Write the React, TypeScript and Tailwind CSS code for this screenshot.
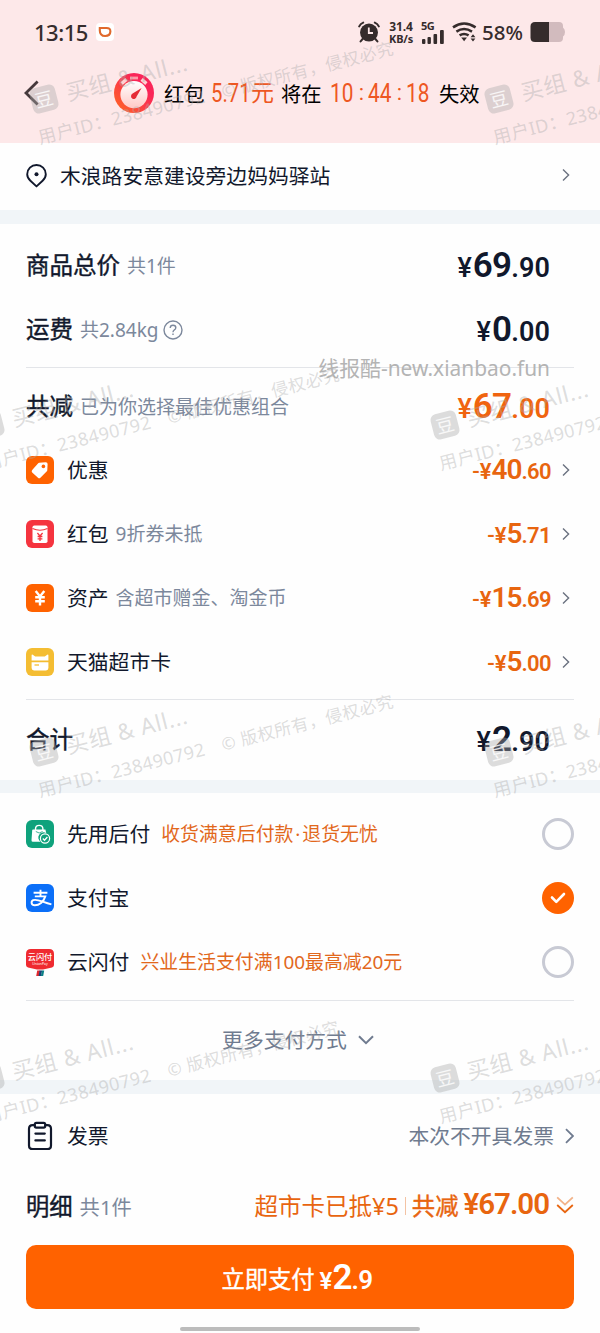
import React from 'react';

const ORANGE = '#ff6200';

const Chevron = ({ className = '' }: { className?: string }) => (
    <svg width="8" height="14" viewBox="0 0 8 14" fill="none" className={className}>
        <path d="M1 1.5L6.6 7L1 12.5" stroke="#6b7280" strokeWidth="1.4" />
    </svg>
);

interface PriceProps {
    whole: string;
    cents: string;
    minus?: boolean;
    small?: boolean;
    color?: string;
}

const Price = ({ whole, cents, minus, small, color = 'text-[#11182c]' }: PriceProps) => (
    <div className={`flex items-baseline font-[Roboto] font-semibold leading-none ${color} ${small ? 'text-[22px]' : 'text-[27px]'}`}>
        {minus && <span className="font-medium">-</span>}
        <span className={small ? '' : 'mr-[1px] font-medium'}>¥</span>
        <span className={small ? 'text-[28px] tracking-[-1px]' : 'text-[35px] tracking-[-0.8px]'}>{whole}</span>
        <span className={small ? 'tracking-[-0.6px]' : 'tracking-[0.1px]'}>.{cents}</span>
    </div>
);

const TagIcon = () => (
    <svg width="28" height="28" viewBox="0 0 28 28">
        <rect width="28" height="28" rx="6" fill={ORANGE} />
        <path d="M13.2 6.8L19.6 6.2Q21.6 6.1 21.6 8.1L21.3 14.2Q21.2 15 20.6 15.6L14.4 21.8Q13.2 22.8 12 21.8L6.2 16.4Q5.1 15.2 6.2 14L12 7.6Q12.5 6.9 13.2 6.8Z" fill="#fff" />
        <circle cx="17.4" cy="10.4" r="1.8" fill={ORANGE} />
    </svg>
);

const PacketIcon = () => (
    <svg width="28" height="28" viewBox="0 0 28 28">
        <rect width="28" height="28" rx="6" fill="#f5343f" />
        <rect x="6.5" y="5.5" width="15" height="17.5" rx="1.8" fill="#fff" />
        <path d="M6.5 8.6Q14 12 21.5 8.6" fill="none" stroke="#f5343f" strokeWidth="1.1" />
        <path d="M11.4 13L14 16L16.6 13M14 16V21M11.6 16.5H16.4M11.6 18.8H16.4" fill="none" stroke="#f5343f" strokeWidth="1.3" />
    </svg>
);

const YuanIcon = () => (
    <svg width="28" height="28" viewBox="0 0 28 28">
        <rect width="28" height="28" rx="6" fill={ORANGE} />
        <path d="M9.7 7L14 12.4L18.3 7M14 12.4V21.5M9.2 13.2H18.8M9.2 17.2H18.8" fill="none" stroke="#fff" strokeWidth="2.4" />
    </svg>
);

const CatCardIcon = () => (
    <svg width="28" height="28" viewBox="0 0 28 28">
        <rect width="28" height="28" rx="6" fill="#f4bd32" />
        <path d="M5.6 12.4V7.2Q5.7 6 6.8 6.8L9.2 8.6H18.8L21.2 6.8Q22.3 6 22.4 7.2V12.4Z" fill="#fff" />
        <path d="M5.6 14.2H22.4V20Q22.4 22.4 20 22.4H8Q5.6 22.4 5.6 20Z" fill="#fff" />
        <path d="M8.5 17H13" stroke="#f4bd32" strokeWidth="1.3" />
    </svg>
);

const BagIcon = () => (
    <svg width="28" height="28" viewBox="0 0 28 28">
        <rect width="28" height="28" rx="6" fill="#0fa27c" />
        <path d="M9.5 11V9Q9.5 5.4 13.2 5.4Q16.9 5.4 16.9 9V11" fill="none" stroke="#fff" strokeWidth="1.4" />
        <path d="M7 9.4H19.4L20.3 13.2A5 5 0 0 0 14.6 21.8H7Q5.4 21.8 5.5 20.2L6.2 10.2Q6.3 9.4 7 9.4Z" fill="#fff" />
        <path d="M9.8 11.5Q13.2 14.5 16.6 11.5" fill="none" stroke="#0fa27c" strokeWidth=".8" />
        <circle cx="19" cy="18.5" r="4.6" fill="#0fa27c" stroke="#fff" strokeWidth="1.2" />
        <path d="M16.8 18.5L18.5 20.2L21.4 17" fill="none" stroke="#fff" strokeWidth="1.3" />
    </svg>
);

const AlipayIcon = () => (
    <svg width="28" height="28" viewBox="0 0 28 28">
        <rect width="28" height="28" rx="6" fill="#0b6ff8" />
        <path d="M7.6 8.8H21.4M14.5 5.8V12.2M8.8 12.4H19.3C17.6 18 13.2 21.4 8.7 21.3C5.2 21.2 4.6 17.6 7.2 16.2C10.8 14.4 15.8 17.9 25.4 20.4" fill="none" stroke="#fff" strokeWidth="1.9" />
    </svg>
);

const UnionIcon = () => (
    <svg width="28" height="28" viewBox="0 0 28 28">
        <path d="M5 1H23Q28 1 28 6V17Q28 19 26 19.4L17 21.4H11L2 19.4Q0 19 0 17V6Q0 1 5 1Z" fill="#ef2a30" />
        <path d="M11.2 22.6H14.2L13 28H10.2Z" fill="#e0282e" />
        <path d="M13.6 22.6H16.2L15 28H12.6Z" fill="#1d3f78" />
        <path d="M16 22.6H18.2L17.2 28H14.8Z" fill="#0b7f86" />
        <text x="14" y="12.4" textAnchor="middle" fontSize="8.2" fontWeight="500" fontFamily="Noto Sans CJK SC, sans-serif" fill="#fff">云闪付</text>
        <text x="14" y="17.4" textAnchor="middle" fontSize="3.4" fontFamily="Noto Sans, sans-serif" fill="#fff">UnionPay</text>
    </svg>
);

const ClipboardIcon = () => (
    <svg width="28" height="30" viewBox="0 0 28 30" fill="none" stroke="#11182c" strokeWidth="2.2" strokeLinecap="round">
        <path d="M8.6 4.2H6.6Q3 4.2 3 7.8V24.4Q3 28 6.6 28H21.4Q25 28 25 24.4V7.8Q25 4.2 21.4 4.2H19.4" />
        <rect x="8.8" y="1.8" width="10.4" height="4.8" rx="1.5" />
        <path d="M9.4 12.6H18.8M9.4 19.4H18.8" />
    </svg>
);

const Radio = ({ checked }: { checked?: boolean }) =>
    checked ? (
        <div className="flex h-8 w-8 items-center justify-center rounded-full bg-[#ff6200]">
            <svg width="16" height="12" viewBox="0 0 16 12" fill="none">
                <path d="M2 5.5L6.3 9.8L14 2" stroke="#fff" strokeWidth="2.6" strokeLinecap="round" strokeLinejoin="round" />
            </svg>
        </div>
    ) : (
        <div className="h-8 w-8 rounded-full border-3 border-[#c8cad4]" />
    );

const SummaryRow = ({ title, hint, help, children }: { title: string; hint?: string; help?: boolean; children: React.ReactNode }) => (
    <div className="flex h-16 items-center justify-between pr-6">
        <div className="flex items-center pt-[2px]">
            <span className="text-[23.5px] [-webkit-text-stroke:0.4px]">{title}</span>
            {hint && <span className="ml-[7px] text-[19px] text-[#7c889c]">{hint}</span>}
            {help && (
                <svg width="20" height="20" viewBox="0 0 20 20" fill="none" stroke="#7c889c" strokeWidth="1.4" className="-mt-px ml-1">
                    <circle cx="10" cy="10" r="9" />
                    <path d="M7.2 8.1Q7.3 5.3 10 5.3Q12.8 5.3 12.8 7.8Q12.8 9.2 11.2 10Q10 10.7 10 12.2M10 13.6V15.1" />
                </svg>
            )}
        </div>
        {children}
    </div>
);

const discounts = [
    { icon: <TagIcon />, name: '优惠', hint: '', whole: '40', cents: '60' },
    { icon: <PacketIcon />, name: '红包', hint: '9折券未抵', whole: '5', cents: '71' },
    { icon: <YuanIcon />, name: '资产', hint: '含超市赠金、淘金币', whole: '15', cents: '69' },
    { icon: <CatCardIcon />, name: '天猫超市卡', hint: '', whole: '5', cents: '00' },
];

const methods = [
    { icon: <BagIcon />, name: '先用后付', hint: '收货满意后付款\u200a·\u200a退货无忧', checked: false },
    { icon: <AlipayIcon />, name: '支付宝', hint: '', checked: true },
    { icon: <UnionIcon />, name: '云闪付', hint: '兴业生活支付满100最高减20元', checked: false },
];

const marks = [
    { x: 44, y: 99 },
    { x: 499, y: 99 },
    { x: -10, y: 425 },
    { x: 445, y: 425 },
    { x: 44, y: 752 },
    { x: 499, y: 752 },
    { x: -10, y: 1078 },
    { x: 445, y: 1078 },
];

const Watermark = ({ x, y }: { x: number; y: number }) => (
    <div className="absolute h-0 w-0 origin-top-left rotate-[-14.3deg]" style={{ left: x, top: y }}>
        <div className="-mt-[13px] -ml-[15px] w-[400px] whitespace-nowrap text-[#aaa]/40">
            <div className="flex h-[26px] items-center pl-[2px]">
                <span className="flex h-[26px] w-[26px] items-center justify-center rounded-md bg-[#aaa]/40 text-[18px] text-white/80">豆</span>
                <span className="ml-[10px] text-[22.5px] tracking-[0.7px]">买组 &amp; All...</span>
            </div>
            <div className="mt-[12px] flex h-[22px] items-center">
                <span className="w-[189px] text-[18px] tracking-[0.4px]">用户ID：238490792</span>
                <span className="text-[17px] tracking-[0.5px]">© 版权所有，侵权必究</span>
            </div>
        </div>
    </div>
);

const StatusBar = () => (
    <div className="flex h-16 items-center pl-[34px] text-[#352c2c]">
        <span className="w-[62px] font-['Noto_Sans'] text-[22px] font-medium tracking-[-0.5px]">13:15</span>
        <span className="flex h-[18px] w-[18px] items-center justify-center rounded bg-white">
            <svg width="14" height="12" viewBox="0 0 14 12" fill="none" stroke="#e0692c" strokeWidth="2.1">
                <path d="M4.6 2H8.6Q12.4 2 12.4 5.4Q12.2 10 7.2 10Q1.8 9.8 1.8 4.4V2H5Z" />
            </svg>
        </span>
        <svg width="22" height="22" viewBox="0 0 22 22" className="ml-[244px]">
            <circle cx="11" cy="11.6" r="9" fill="currentColor" />
            <path d="M1.2 5.4Q2.4 2.8 5.2 1.6M20.8 5.4Q19.6 2.8 16.8 1.6M4.6 18L2.6 20.4M17.4 18L19.4 20.4" stroke="currentColor" strokeWidth="2" strokeLinecap="round" fill="none" />
            <path d="M10.8 6.6V12H15" stroke="#fde8e9" strokeWidth="1.8" fill="none" />
        </svg>
        <span className="ml-[7px] flex w-7 flex-col items-center font-['Noto_Sans'] font-bold">
            <span className="text-[12px] leading-[12px] tracking-[-0.1px]">31.4</span>
            <span className="text-[11px] leading-[11px] tracking-[-0.2px]">KB/s</span>
        </span>
        <div className="ml-[6px] flex w-6 flex-col">
            <span className="font-['Noto_Sans'] text-[11px] leading-[9px] font-bold tracking-[-0.5px]">5G</span>
            <svg width="24" height="14" viewBox="0 0 24 14" fill="currentColor">
                <rect x="1" y="9" width="3.4" height="5" rx="1" />
                <rect x="6.5" y="7" width="3.4" height="7" rx="1" />
                <rect x="12.5" y="4" width="3.6" height="10" rx="1" />
                <rect x="19" y="0" width="3.8" height="14" rx="1" />
            </svg>
        </div>
        <svg width="25" height="20" viewBox="0 0 25 20" fill="none" stroke="currentColor" strokeWidth="2.5" className="ml-[7px]">
            <path d="M1 5.4Q12 -2.2 23.6 5.4M4.4 9.6Q12 4.6 20 9.6M7.6 13.4Q12 10.4 16.6 13.4" />
            <path d="M9.2 15.6H15L12.1 19.2Z" fill="currentColor" stroke="none" />
            <path d="M18.6 15.2L21 12.2L23.4 15.2ZM18.6 16.6L21 19.6L23.4 16.6Z" fill="currentColor" stroke="none" />
        </svg>
        <span className="ml-[5px] w-12 font-['Noto_Sans'] text-[20.5px] font-medium">58%</span>
        <svg width="36" height="22" viewBox="0 0 36 22" className="shrink-0">
            <path d="M19 1H29Q33 1 33 5V6.5Q35 8 35 11Q35 14 33 15.5V17Q33 21 29 21H19Z" fill="#d2bbbe" />
            <path d="M5 1H19V21H5Q0.5 21 0.5 16.5V5.5Q0.5 1 5 1Z" fill="#352c2c" />
        </svg>
    </div>
);

const Stopwatch = () => (
    <svg width="40" height="40" viewBox="0 0 40 40">
        <defs>
            <linearGradient id="ring" x1="1" y1="0" x2="0" y2="1">
                <stop offset="0.3" stopColor="#fa2558" />
                <stop offset="1" stopColor="#ff6a20" />
            </linearGradient>
            <linearGradient id="dial" x1="0" y1="0" x2="0" y2="1">
                <stop offset="0" stopColor="#fff" />
                <stop offset="1" stopColor="#ffc9c6" />
            </linearGradient>
        </defs>
        <circle cx="20" cy="20" r="20" fill="url(#ring)" />
        <path d="M7.6 10.6L12.4 6.4M27.6 6.4L32.4 10.6" stroke="#ffd0d2" strokeWidth="3.4" />
        <path d="M16 3.6H24V6.4H16Z" fill="#ff9aa6" />
        <circle cx="20" cy="21.6" r="13.6" fill="url(#dial)" />
        <path d="M27.6 15L22.6 23.4A2.8 2.8 0 1 1 18.6 20.6Z" fill="#e52b35" />
    </svg>
);

const Countdown = () => (
    <div className="flex w-[109px] items-center font-[Roboto] text-[26px] leading-none text-[#ee5722]">
        {['10', ':', '44', ':', '18'].map((part, i) => (
            <span key={i} className={part === ':' ? 'w-[13px] text-center text-[22px]' : 'w-[25px]'}>
                <span className={part === ':' ? '' : 'inline-block origin-left scale-x-[.8]'}>{part}</span>
            </span>
        ))}
    </div>
);

const Header = () => (
    <header className="h-[143px] bg-[#fde8e9]">
        <StatusBar />
        <div className="flex h-[57px] items-center pl-6 text-[20.3px] text-black">
            <svg width="15" height="26" viewBox="0 0 15 26" fill="none" stroke="#46393c" strokeWidth="2.8">
                <path d="M13.6 1.6L2 13L13.6 24.4" />
            </svg>
            <div className="ml-[75px] flex items-center">
                <Stopwatch />
                <span className="mt-[3px] ml-[10px] w-[47px]">红包</span>
                <span className="flex w-[70px] items-center text-[#ee5722]">
                    <span className="w-[40px] font-[Roboto] text-[26px] leading-none">
                        <span className="inline-block origin-left scale-x-[.78]">5.71</span>
                    </span>
                    <span className="text-[23px]">元</span>
                </span>
                <span className="mt-[3px] w-[49px]">将在</span>
                <Countdown />
                <span className="mt-[3px]">失效</span>
            </div>
        </div>
    </header>
);

export default function App() {
    return (
        <div className="relative h-[1333px] w-[600px] overflow-hidden bg-[#f1f5f8] font-['Noto_Sans','Noto_Sans_CJK_SC',sans-serif] leading-none whitespace-nowrap text-[#11182c]">
            <Header />

            <section className="flex h-[67px] items-center bg-[#fefefe] pr-[30px] pl-[26px]">
                <svg width="21" height="24" viewBox="0 0 21 24" fill="none" stroke="#11182c" strokeWidth="1.9" className="-mt-[2px]">
                    <path d="M10.5 22.4L4.4 16.8Q1.2 13.8 1.2 10.2A9.3 9.2 0 0 1 19.8 10.2Q19.8 13.8 16.6 16.8Z" strokeLinejoin="round" />
                    <circle cx="10.5" cy="10.2" r="2" fill="#11182c" stroke="none" />
                </svg>
                <span className="ml-[13px] flex-1 text-[20.8px]">木浪路安意建设旁边妈妈驿站</span>
                <Chevron className="-mt-[3px]" />
            </section>

            <section className="mt-[14px] h-[556px] bg-[#fefefe] px-[26px] pt-[9px]">
                <SummaryRow title="商品总价" hint="共1件">
                    <Price whole="69" cents="90" />
                </SummaryRow>
                <SummaryRow title="运费" hint="共2.84kg" help>
                    <Price whole="0" cents="00" />
                </SummaryRow>
                <hr className="mt-[6px] mb-[6px] border-[#e3e5e9]" />
                <SummaryRow title="共减" hint="已为你选择最佳优惠组合">
                    <Price whole="67" cents="00" color="text-[#f0640f]" />
                </SummaryRow>
                {discounts.map((d) => (
                    <div key={d.name} className="flex h-16 items-center">
                        {d.icon}
                        <span className="ml-[13px] text-[20.8px]">{d.name}</span>
                        {d.hint && <span className="ml-[7px] text-[19px] text-[#7c889c]">{d.hint}</span>}
                        <div className="ml-auto flex items-center pr-1">
                            <Price whole={d.whole} cents={d.cents} minus small color="text-[#e8650f]" />
                            <Chevron className="ml-[11px]" />
                        </div>
                    </div>
                ))}
                <hr className="mt-[5px] mb-[7px] border-[#e3e5e9]" />
                <SummaryRow title="合计">
                    <Price whole="2" cents="90" />
                </SummaryRow>
            </section>

            <section className="mt-[13px] h-[287px] bg-[#fefefe] px-[26px] pt-[9px]">
                {methods.map((m) => (
                    <div key={m.name} className="flex h-16 items-center">
                        {m.icon}
                        <span className="ml-[13px] text-[20.8px]">{m.name}</span>
                        {m.hint && <span className="mt-px ml-[11px] text-[18.9px] text-[#e2681c]">{m.hint}</span>}
                        <div className="ml-auto">
                            <Radio checked={m.checked} />
                        </div>
                    </div>
                ))}
                <hr className="mt-[6px] mb-[7px] border-[#e3e5e9]" />
                <div className="flex h-16 items-center justify-center pr-[4px] text-[20.8px] text-[#6f7b8f]">
                    更多支付方式
                    <svg width="16" height="10" viewBox="0 0 16 10" fill="none" stroke="#6f7b8f" strokeWidth="2" className="ml-[11px]">
                        <path d="M1 1.2L8 8.2L15 1.2" />
                    </svg>
                </div>
            </section>

            <section className="mt-[14px] h-[239px] bg-[#fefefe] px-[26px] pt-[10px]">
                <div className="flex h-16 items-center">
                    <ClipboardIcon />
                    <span className="ml-[13px] text-[20.8px]">发票</span>
                    <span className="ml-auto text-[20.8px] text-[#6f7b8f]">本次不开具发票</span>
                    <svg width="9" height="16" viewBox="0 0 9 16" fill="none" stroke="#6f7b8f" strokeWidth="1.8" className="-mt-px ml-[11px]">
                        <path d="M1 1.2L8 8L1 14.8" />
                    </svg>
                </div>
                <div className="mt-[6px] flex h-16 items-center text-[#e8650f]">
                    <span className="mt-[2px] text-[23.3px] text-[#11182c] [-webkit-text-stroke:0.4px]">明细</span>
                    <span className="mt-[2px] ml-[7px] text-[20.3px] text-[#7c889c]">共1件</span>
                    <span className="mt-[2px] ml-auto text-[23.5px]">超市卡已抵¥5</span>
                    <span className="mr-[6px] ml-[6px] h-[18px] w-px bg-[#f3c3a4]" />
                    <span className="mt-[2px] text-[23.3px] [-webkit-text-stroke:0.4px]">共减</span>
                    <span className="-mt-[3px] ml-[5px] font-[Roboto] text-[29.5px] font-semibold tracking-[-1px]">¥67.00</span>
                    <svg width="18" height="18" viewBox="0 0 18 18" fill="none" stroke="#e8650f" strokeWidth="1.8" className="-mt-[3px] ml-[7px]">
                        <path d="M1.2 1.4L9 8.6L16.8 1.4" opacity=".5" />
                        <path d="M1.2 9L9 16.2L16.8 9" />
                    </svg>
                </div>
                <button className="mt-[7px] flex h-16 w-full items-center justify-center rounded-[10px] bg-[#ff6200] pr-[6px] text-white">
                    <span className="mt-[6px] text-[23.3px] leading-none [-webkit-text-stroke:0.4px]">立即支付</span>
                    <span className="ml-[5px] flex items-baseline font-[Roboto] text-[26px] leading-none font-semibold">
                        <span className="text-[24px]">¥</span>
                        <span className="text-[35px] tracking-[-1px]">2</span>
                        <span className="tracking-[-0.5px]">.9</span>
                    </span>
                </button>
                <div className="mx-auto mt-[18px] h-[4px] w-[240px] rounded-full bg-[#bcbcbc]" />
            </section>

            <div className="absolute top-[357px] right-[50px] text-[20.9px] leading-[22px] text-[#b4b4b4]">线报酷-new.xianbao.fun</div>

            <div className="pointer-events-none absolute inset-0">
                {marks.map((m, i) => (
                    <Watermark key={i} x={m.x} y={m.y} />
                ))}
            </div>
        </div>
    );
}
